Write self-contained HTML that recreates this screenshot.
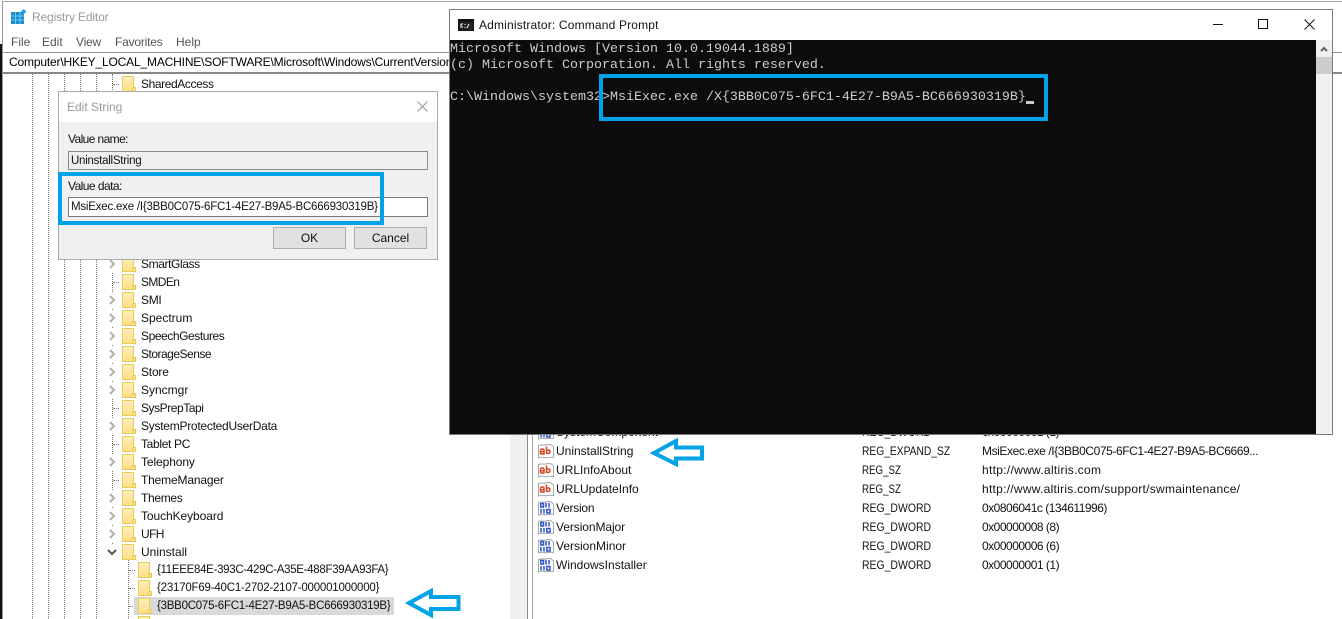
<!DOCTYPE html>
<html><head><meta charset="utf-8"><style>
html,body{margin:0;padding:0;background:#fff}
#p{position:relative;width:1342px;height:619px;overflow:hidden;background:#fff;font:12px/16px "Liberation Sans",sans-serif;color:#111}
.a{position:absolute}
.t{position:absolute;white-space:nowrap;font:12px/16px "Liberation Sans",sans-serif;color:#111}
.r{left:141px}.c{left:157px;font-size:11.5px}
.n{left:556px}.k{left:862px;transform:scaleX(.87);transform-origin:0 50%}.w{left:982px}
.v{position:absolute;width:0;border-left:1px dotted #777}
.f{position:absolute;width:14px;height:16px}
.ch{position:absolute;left:108px;width:8px;height:10px}
.d{position:absolute;left:113px;width:6px;height:0;border-top:1px dotted #777}
.b{position:absolute;border:4px solid #00a2e8;box-sizing:border-box}
.m{position:absolute;white-space:pre;font:13.33px/16px "Liberation Mono",monospace;color:#ccc}
.btn{position:absolute;box-sizing:border-box;background:#e1e1e1;border:1px solid #adadad;text-align:center;line-height:20px;height:22px;top:227px}
.ic{position:absolute;left:538px;width:16px;height:16px}
.o{position:absolute;left:106px;width:12px;height:16px;background:#fff}
</style></head><body><div id="p">
<svg width="0" height="0" style="position:absolute"><defs>
<linearGradient id="fg" x1="0" y1="0" x2="0" y2="1"><stop offset="0" stop-color="#fff0c0"/><stop offset="1" stop-color="#ffdf85"/></linearGradient>
<symbol id="fo" viewBox="0 0 14 16"><path d="M.5.5H11.500V15.500H.5Z" fill="url(#fg)" stroke="#eccb55"/><path d="M10.500 11.500H13.500V15.500H10.500Z" fill="#ffe08a" stroke="#eccb55"/></symbol>
<symbol id="cv" viewBox="0 0 8 10"><path d="M2 1L6 5L2 9" fill="none" stroke="#b0b0b0" stroke-width="2"/></symbol>
<symbol id="ab" viewBox="0 0 16 16"><path d="M.5 2.500C4 1 6 3 10 1.500L12.500 1.500L15.500 4V14.500C12 13.500 9 15.500 6 14.500C4 14 2 14.500 .5 15Z" fill="#fff" stroke="#a8a8a8"/><path d="M2.500 11V7.500C2.500 5.500 6 5.500 6 7.500V11H3.300C2 11 2 8.800 3.300 8.800H6M8.500 3.500V11M8.500 8.500C8.500 6.500 12 6.500 12 8.500C12 11 8.500 11 8.500 9" fill="none" stroke="#d8492a" stroke-width="1.500"/></symbol>
<symbol id="bn" viewBox="0 0 16 16"><path d="M.5 2.500C4 1 6 3 10 1.500L12.500 1.500L15.500 4V14.500C12 13.500 9 15.500 6 14.500C4 14 2 14.500 .5 15Z" fill="#fff" stroke="#a8a8a8"/><path d="M2.800 3.500h2.700v3.500H2.800zM8 3v4.500M11 3v4.500M3 9v4.500M6 9v4.500M8.800 9.500h3.200v3.500H8.800z" fill="none" stroke="#2a55c8" stroke-width="1.500"/></symbol>
</defs></svg>

<!-- registry window frame -->
<div class="a" style="left:0;top:44px;width:2px;height:575px;background:#111"></div>
<div class="a" style="left:2px;top:1px;width:1340px;height:1px;background:#aaa"></div>
<div class="a" style="left:2px;top:1px;width:1px;height:618px;background:#999"></div>
<svg class="a" style="left:11px;top:9px" width="16" height="16" viewBox="0 0 16 16"><path d="M0 3h13v12H0z" fill="#1c8cd0"/><path d="M4.500 3v12M9 3v12M0 7h13M0 11h13" stroke="#6cc6f0"/><path d="M12.500 0l3 2.500-3 3-2.500-3z" fill="#2a9fe0"/></svg>
<div class="t" style="left:32px;top:9px;color:#999;letter-spacing:-.15px">Registry Editor</div>
<div class="t" style="left:11px;top:34px;color:#555">File</div>
<div class="t" style="left:42px;top:34px;color:#555">Edit</div>
<div class="t" style="left:76px;top:34px;color:#555;letter-spacing:-.2px">View</div>
<div class="t" style="left:115px;top:34px;color:#555;letter-spacing:-.2px">Favorites</div>
<div class="t" style="left:176px;top:34px;color:#555">Help</div>
<div class="a" style="left:3px;top:52px;width:1339px;height:1px;background:#999"></div>
<div class="a" style="left:3px;top:72px;width:1339px;height:2px;background:#888"></div>
<div class="t" style="left:9px;top:54px;color:#000;letter-spacing:-.17px">Computer\HKEY_LOCAL_MACHINE\SOFTWARE\Microsoft\Windows\CurrentVersion\Uninstall\{3BB0C075-6FC1-4E27-B9A5-BC666930319B}</div>

<!-- tree guides -->
<div class="v" style="left:32px;top:74px;height:545px"></div>
<div class="v" style="left:48px;top:74px;height:545px"></div>
<div class="v" style="left:64px;top:74px;height:545px"></div>
<div class="v" style="left:80px;top:74px;height:545px"></div>
<div class="v" style="left:96px;top:74px;height:545px"></div>
<div class="v" style="left:112px;top:74px;height:470px"></div>
<div class="v" style="left:128px;top:560px;height:59px"></div>
<div class="o" style="top:256px"></div>
<div class="o" style="top:292px"></div>
<div class="o" style="top:310px"></div>
<div class="o" style="top:328px"></div>
<div class="o" style="top:346px"></div>
<div class="o" style="top:364px"></div>
<div class="o" style="top:382px"></div>
<div class="o" style="top:418px"></div>
<div class="o" style="top:454px"></div>
<div class="o" style="top:490px"></div>
<div class="o" style="top:508px"></div>
<div class="o" style="top:526px"></div>

<!-- dotted connectors -->
<div class="d" style="top:84px"></div><div class="d" style="top:282px"></div><div class="d" style="top:408px"></div><div class="d" style="top:444px"></div><div class="d" style="top:480px"></div>
<div class="d" style="left:129px;top:570px"></div><div class="d" style="left:129px;top:588px"></div><div class="d" style="left:129px;top:606px"></div>

<!-- chevrons -->
<svg class="ch" style="top:259px"><use href="#cv"/></svg>
<svg class="ch" style="top:295px"><use href="#cv"/></svg>
<svg class="ch" style="top:313px"><use href="#cv"/></svg>
<svg class="ch" style="top:331px"><use href="#cv"/></svg>
<svg class="ch" style="top:349px"><use href="#cv"/></svg>
<svg class="ch" style="top:367px"><use href="#cv"/></svg>
<svg class="ch" style="top:385px"><use href="#cv"/></svg>
<svg class="ch" style="top:421px"><use href="#cv"/></svg>
<svg class="ch" style="top:457px"><use href="#cv"/></svg>
<svg class="ch" style="top:493px"><use href="#cv"/></svg>
<svg class="ch" style="top:511px"><use href="#cv"/></svg>
<svg class="ch" style="top:529px"><use href="#cv"/></svg>
<svg class="a" style="left:107px;top:549px" width="10" height="7"><path d="M1 1L5 5L9 1" fill="none" stroke="#555" stroke-width="2"/></svg>

<!-- selection -->
<div class="a" style="left:134px;top:597px;width:260px;height:18px;background:#d9d9d9"></div>

<!-- folders -->
<svg class="f" style="left:122px;top:76px"><use href="#fo"/></svg>
<svg class="f" style="left:122px;top:256px"><use href="#fo"/></svg>
<svg class="f" style="left:122px;top:274px"><use href="#fo"/></svg>
<svg class="f" style="left:122px;top:292px"><use href="#fo"/></svg>
<svg class="f" style="left:122px;top:310px"><use href="#fo"/></svg>
<svg class="f" style="left:122px;top:328px"><use href="#fo"/></svg>
<svg class="f" style="left:122px;top:346px"><use href="#fo"/></svg>
<svg class="f" style="left:122px;top:364px"><use href="#fo"/></svg>
<svg class="f" style="left:122px;top:382px"><use href="#fo"/></svg>
<svg class="f" style="left:122px;top:400px"><use href="#fo"/></svg>
<svg class="f" style="left:122px;top:418px"><use href="#fo"/></svg>
<svg class="f" style="left:122px;top:436px"><use href="#fo"/></svg>
<svg class="f" style="left:122px;top:454px"><use href="#fo"/></svg>
<svg class="f" style="left:122px;top:472px"><use href="#fo"/></svg>
<svg class="f" style="left:122px;top:490px"><use href="#fo"/></svg>
<svg class="f" style="left:122px;top:508px"><use href="#fo"/></svg>
<svg class="f" style="left:122px;top:526px"><use href="#fo"/></svg>
<svg class="f" style="left:122px;top:544px"><use href="#fo"/></svg>
<svg class="f" style="left:138px;top:562px"><use href="#fo"/></svg>
<svg class="f" style="left:138px;top:580px"><use href="#fo"/></svg>
<svg class="f" style="left:138px;top:598px"><use href="#fo"/></svg>
<svg class="f" style="left:138px;top:616px"><use href="#fo"/></svg>

<!-- tree labels -->
<div class="t r" style="top:76px;letter-spacing:-.4px">SharedAccess</div>
<div class="t r" style="top:256px;letter-spacing:-.4px">SmartGlass</div>
<div class="t r" style="top:274px;letter-spacing:-.6px">SMDEn</div>
<div class="t r" style="top:292px;letter-spacing:-.3px">SMI</div>
<div class="t r" style="top:310px">Spectrum</div>
<div class="t r" style="top:328px;letter-spacing:-.43px">SpeechGestures</div>
<div class="t r" style="top:346px;letter-spacing:-.5px">StorageSense</div>
<div class="t r" style="top:364px;letter-spacing:-.2px">Store</div>
<div class="t r" style="top:382px">Syncmgr</div>
<div class="t r" style="top:400px;letter-spacing:-.45px">SysPrepTapi</div>
<div class="t r" style="top:418px;letter-spacing:-.26px">SystemProtectedUserData</div>
<div class="t r" style="top:436px;letter-spacing:-.33px">Tablet PC</div>
<div class="t r" style="top:454px;letter-spacing:-.1px">Telephony</div>
<div class="t r" style="top:472px;letter-spacing:-.17px">ThemeManager</div>
<div class="t r" style="top:490px;letter-spacing:-.33px">Themes</div>
<div class="t r" style="top:508px;letter-spacing:-.08px">TouchKeyboard</div>
<div class="t r" style="top:526px;letter-spacing:-.6px">UFH</div>
<div class="t r" style="top:544px">Uninstall</div>
<div class="t c" style="top:562px;letter-spacing:-.3px">{11EEE84E-393C-429C-A35E-488F39AA93FA}</div>
<div class="t c" style="top:580px;letter-spacing:-.21px">{23170F69-40C1-2702-2107-000001000000}</div>
<div class="t c" style="top:598px;letter-spacing:-.25px">{3BB0C075-6FC1-4E27-B9A5-BC666930319B}</div>

<!-- tree scrollbar + splitter -->
<div class="a" style="left:510px;top:74px;width:17px;height:545px;background:#f0f0f0"></div>
<div class="a" style="left:527px;top:74px;width:1px;height:545px;background:#8a8a8a"></div>
<div class="a" style="left:532px;top:74px;width:1px;height:545px;background:#a0a0a0"></div>

<!-- value list -->
<svg class="ic" style="top:424px"><use href="#bn"/></svg>
<svg class="ic" style="top:443px"><use href="#ab"/></svg>
<svg class="ic" style="top:462px"><use href="#ab"/></svg>
<svg class="ic" style="top:481px"><use href="#ab"/></svg>
<svg class="ic" style="top:500px"><use href="#bn"/></svg>
<svg class="ic" style="top:519px"><use href="#bn"/></svg>
<svg class="ic" style="top:538px"><use href="#bn"/></svg>
<svg class="ic" style="top:557px"><use href="#bn"/></svg>
<div class="t n" style="top:424px">SystemComponent</div><div class="t k" style="top:424px">REG_DWORD</div><div class="t w" style="top:424px;letter-spacing:-.5px">0x00000001 (1)</div>
<div class="t n" style="top:443px">UninstallString</div><div class="t k" style="top:443px;transform:scaleX(.854)">REG_EXPAND_SZ</div><div class="t w" style="top:443px;letter-spacing:-.42px">MsiExec.exe /I{3BB0C075-6FC1-4E27-B9A5-BC6669...</div>
<div class="t n" style="top:462px">URLInfoAbout</div><div class="t k" style="top:462px;transform:scaleX(.81)">REG_SZ</div><div class="t w" style="top:462px;letter-spacing:.3px">http://www.altiris.com</div>
<div class="t n" style="top:481px">URLUpdateInfo</div><div class="t k" style="top:481px;transform:scaleX(.81)">REG_SZ</div><div class="t w" style="top:481px;letter-spacing:.27px">http://www.altiris.com/support/swmaintenance/</div>
<div class="t n" style="top:500px;letter-spacing:-.25px">Version</div><div class="t k" style="top:500px">REG_DWORD</div><div class="t w" style="top:500px;letter-spacing:-.5px">0x0806041c (134611996)</div>
<div class="t n" style="top:519px;letter-spacing:-.08px">VersionMajor</div><div class="t k" style="top:519px">REG_DWORD</div><div class="t w" style="top:519px;letter-spacing:-.5px">0x00000008 (8)</div>
<div class="t n" style="top:538px">VersionMinor</div><div class="t k" style="top:538px">REG_DWORD</div><div class="t w" style="top:538px;letter-spacing:-.5px">0x00000006 (6)</div>
<div class="t n" style="top:557px">WindowsInstaller</div><div class="t k" style="top:557px">REG_DWORD</div><div class="t w" style="top:557px;letter-spacing:-.5px">0x00000001 (1)</div>

<!-- edit string dialog -->
<div class="a" style="left:58px;top:91px;width:380px;height:169px;box-sizing:border-box;border:1px solid #aaa;background:#f0f0f0"></div>
<div class="a" style="left:59px;top:92px;width:378px;height:30px;background:#fff"></div>
<div class="t" style="left:67px;top:99px;color:#999">Edit String</div>
<svg class="a" style="left:417px;top:101px" width="11" height="11"><path d="M.5.5L10.500 10.500M10.500.5L.5 10.500" stroke="#999"/></svg>
<div class="t" style="left:68px;top:131px;letter-spacing:-.6px">Value name:</div>
<div class="a" style="left:68px;top:151px;width:360px;height:19px;box-sizing:border-box;border:1px solid #8a8a8a;background:#efefef"></div>
<div class="t" style="left:71px;top:153px;font-size:11.5px;letter-spacing:-.25px">UninstallString</div>
<div class="t" style="left:68px;top:178px;letter-spacing:-.55px">Value data:</div>
<div class="a" style="left:68px;top:197px;width:360px;height:20px;box-sizing:border-box;border:1px solid #7a7a7a;background:#fff"></div>
<div class="t" style="left:71px;top:199px;font-size:11.5px;letter-spacing:-.21px">MsiExec.exe /I{3BB0C075-6FC1-4E27-B9A5-BC666930319B}</div>
<div class="b" style="left:58px;top:172px;width:326px;height:53px"></div>
<div class="btn" style="left:273px;width:73px">OK</div>
<div class="btn" style="left:354px;width:73px">Cancel</div>

<!-- command prompt -->
<div class="a" style="left:449px;top:9px;width:884px;height:426px;box-sizing:border-box;border:1px solid #7a7a7a;background:#fff"></div>
<div class="a" style="left:450px;top:40px;width:866px;height:394px;background:#0c0c0c"></div>
<div class="a" style="left:1316px;top:40px;width:16px;height:394px;background:#f0f0f0"></div>
<div class="a" style="left:1316px;top:57px;width:16px;height:17px;background:#cdcdcd"></div>
<svg class="a" style="left:1320px;top:46px" width="8" height="6"><path d="M1 5L4 2L7 5" fill="none" stroke="#606060" stroke-width="2"/></svg>
<svg class="a" style="left:458px;top:19px" width="16" height="12"><rect width="16" height="12" fill="#111"/><rect x="1" y="3" width="14" height="8" fill="#222"/><path d="M3 5H5M3 5V8H5M7 5V6M7 8V9M9 9L11 5" stroke="#fff" fill="none"/></svg>
<div class="t" style="left:479px;top:17px;letter-spacing:.17px">Administrator: Command Prompt</div>
<div class="a" style="left:1213px;top:24px;width:10px;height:1px;background:#111"></div>
<div class="a" style="left:1258px;top:19px;width:10px;height:10px;box-sizing:border-box;border:1px solid #111"></div>
<svg class="a" style="left:1304px;top:19px" width="11" height="11"><path d="M.5.5L10.500 10.500M10.500.5L.5 10.500" stroke="#111"/></svg>
<div class="m" style="left:450px;top:42px">Microsoft Windows [Version 10.0.19044.1889]</div>
<div class="m" style="left:450px;top:58px">(c) Microsoft Corporation. All rights reserved.</div>
<div class="m" style="left:450px;top:90px">C:\Windows\system32&gt;MsiExec.exe /X{3BB0C075-6FC1-4E27-B9A5-BC666930319B}</div>
<div class="a" style="left:1026px;top:101px;width:8px;height:3px;background:#ccc"></div>
<div class="b" style="left:599px;top:74px;width:449px;height:47px"></div>

<!-- arrows -->
<svg class="a" style="left:0;top:0" width="1342" height="619" fill="none" stroke="#00a2e8" stroke-width="4">
<path d="M409 603L431 591V597H458.500V609H431V615Z"/>
<path d="M654 453L676 441V447.500H702V458.500H676V464Z"/>
</svg>
</div></body></html>
